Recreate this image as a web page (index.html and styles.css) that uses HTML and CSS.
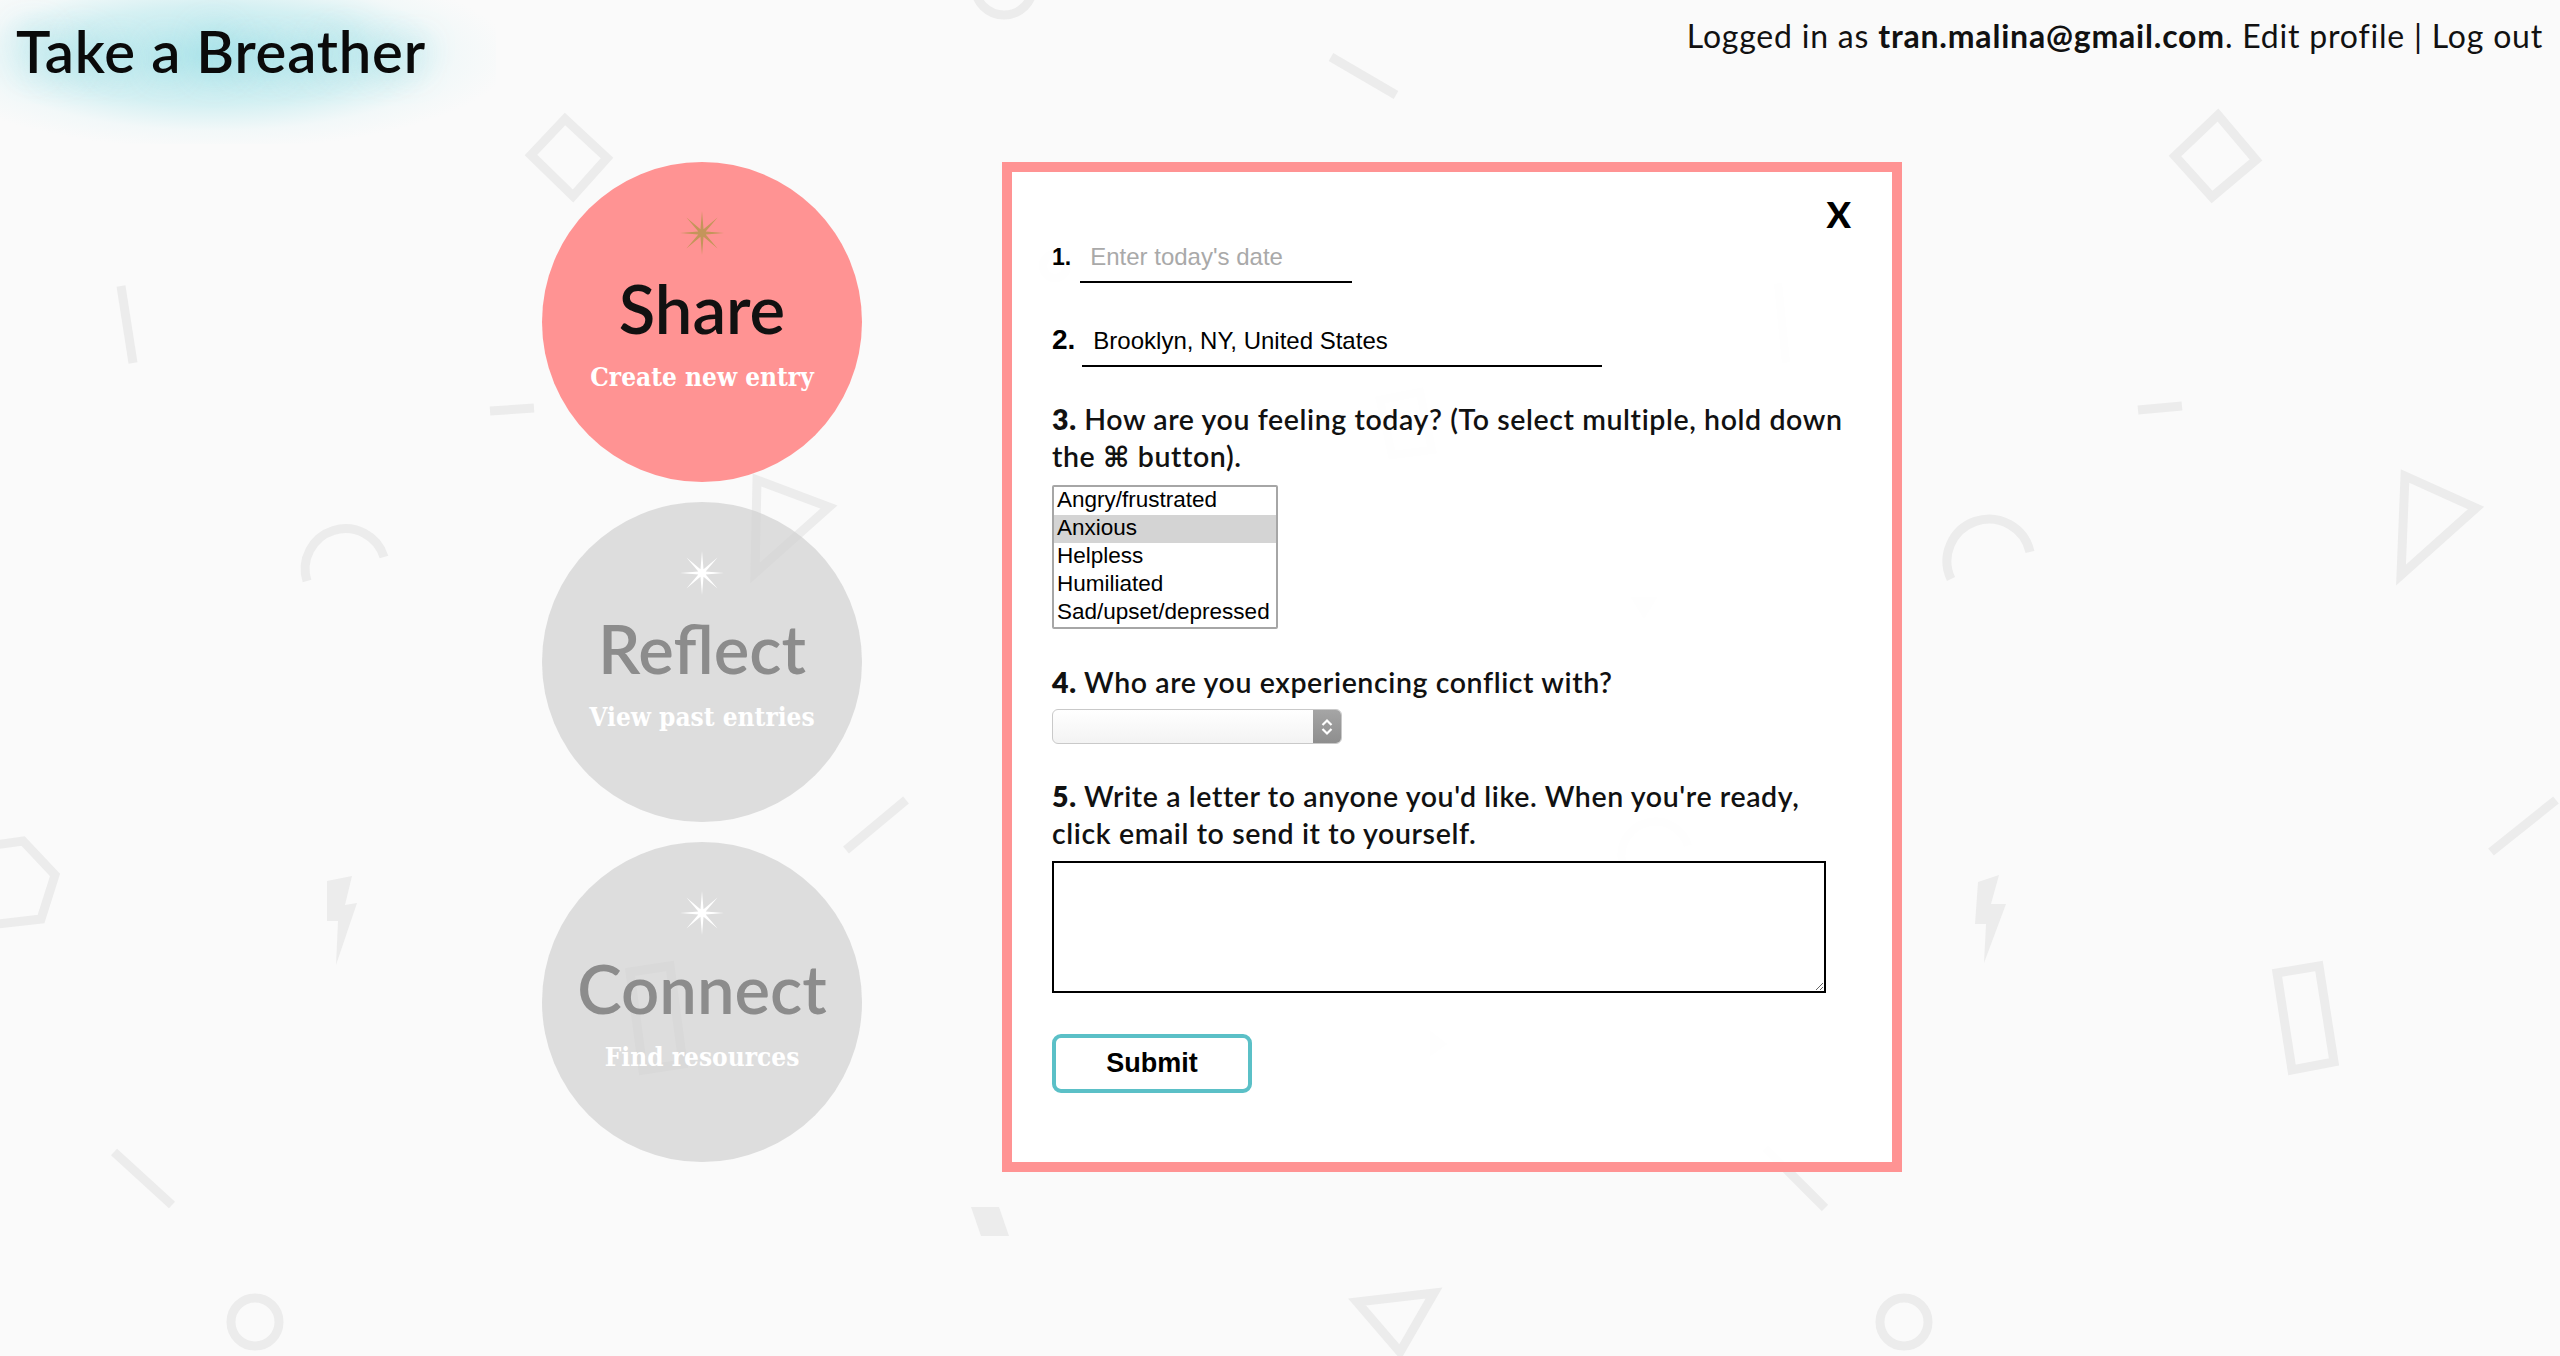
FILE: index.html
```html
<!DOCTYPE html>
<html lang="en">
<head>
<meta charset="utf-8">
<title>Take a Breather</title>
<link rel="stylesheet" href="styles.css">
</head>
<body>
<svg class="bg-shapes" viewBox="0 0 2560 1356" width="2560" height="1356" aria-hidden="true">
  <g class="outline">
    <circle cx="1004" cy="-14" r="29"/>
    <line x1="1331" y1="57" x2="1396" y2="95"/>
    <polygon points="531,155 565,119 607,158 573,196"/>
    <line x1="121" y1="286" x2="133" y2="363"/>
    <line x1="490" y1="411" x2="534" y2="408"/>
    <path d="M307 581 A40 40 0 1 1 384 557"/>
    <polygon points="-20,847 23,841 55,875 41,919 -20,926"/>
    <line x1="114" y1="1152" x2="172" y2="1205"/>
    <circle cx="255" cy="1322" r="24"/>
    <polygon points="757,480 829,507 755,573"/>
    <polygon points="630,972 670,966 683,1064 643,1070"/>
    <line x1="846" y1="850" x2="906" y2="800"/>
    <polygon points="1357,1302 1434,1293 1400,1352"/>
    <circle cx="1904" cy="1322" r="24"/>
    <line x1="1765" y1="1148" x2="1825" y2="1208"/>
    <polygon points="2175,156 2218,115 2256,160 2212,197"/>
    <line x1="2138" y1="410" x2="2182" y2="406"/>
    <path d="M1951 579 A42 42 0 1 1 2030 552"/>
    <polygon points="2405,476 2476,508 2401,575"/>
    <line x1="2491" y1="852" x2="2556" y2="800"/>
    <polygon points="2277,973 2319,966 2334,1062 2292,1070"/>
    <polygon points="1380,400 1420,392 1432,450 1392,455"/>
    <line x1="1778" y1="283" x2="1786" y2="363"/>
    <circle cx="1055" cy="266" r="12"/>
    <path d="M1622 862 A34 34 0 0 1 1688 846"/>
  </g>
  <g class="solid">
    <polygon points="327,881 352,876 345,905 357,903 336,965 338,921 327,921"/>
    <polygon points="1978,882 1999,875 1991,904 2006,904 1984,963 1986,924 1975,924"/>
    <polygon points="971,1207 999,1207 1009,1236 981,1236"/>
    <polygon points="1630,597 1658,597 1644,620"/>
    <polygon points="1430,1030 1448,1044 1430,1057"/>
  </g>
</svg>

<header class="topbar">
  <h1 class="brand">Take a Breather</h1>
  <div class="account">Logged in as <b>tran.malina@gmail.com</b>. Edit profile | Log out</div>
</header>

<main class="stage">
  <nav class="menu">
    <a class="bubble bubble-active" href="#share">
      <svg class="star" viewBox="0 0 44 44" width="44" height="44" aria-hidden="true"><polygon points="44,22 25.7,20.47 37.56,6.44 23.53,18.3 22,0 20.47,18.3 6.44,6.44 18.3,20.47 0,22 18.3,23.53 6.44,37.56 20.47,25.7 22,44 23.53,25.7 37.56,37.56 25.7,23.53"/></svg>
      <span class="bubble-title">Share</span>
      <span class="bubble-sub">Create new entry</span>
    </a>
    <a class="bubble" href="#reflect">
      <svg class="star" viewBox="0 0 44 44" width="44" height="44" aria-hidden="true"><polygon points="44,22 25.7,20.47 37.56,6.44 23.53,18.3 22,0 20.47,18.3 6.44,6.44 18.3,20.47 0,22 18.3,23.53 6.44,37.56 20.47,25.7 22,44 23.53,25.7 37.56,37.56 25.7,23.53"/></svg>
      <span class="bubble-title">Reflect</span>
      <span class="bubble-sub">View past entries</span>
    </a>
    <a class="bubble" href="#connect">
      <svg class="star" viewBox="0 0 44 44" width="44" height="44" aria-hidden="true"><polygon points="44,22 25.7,20.47 37.56,6.44 23.53,18.3 22,0 20.47,18.3 6.44,6.44 18.3,20.47 0,22 18.3,23.53 6.44,37.56 20.47,25.7 22,44 23.53,25.7 37.56,37.56 25.7,23.53"/></svg>
      <span class="bubble-title">Connect</span>
      <span class="bubble-sub">Find resources</span>
    </a>
  </nav>

  <section class="modal">
    <div class="modal-head"><span class="close">X</span></div>
    <form class="entry-form">
      <div class="field-row row-date">
        <span class="num num-small">1.</span>
        <input class="line-input input-date" type="text" placeholder="Enter today's date">
      </div>
      <div class="field-row row-place">
        <span class="num num-large">2.</span>
        <input class="line-input input-place" type="text" value="Brooklyn, NY, United States">
      </div>
      <p class="question q-feel"><b>3.</b> How are you feeling today? (To select multiple, hold down the ⌘ button).</p>
      <select class="feelings" multiple size="5">
        <option>Angry/frustrated</option>
        <option selected>Anxious</option>
        <option>Helpless</option>
        <option>Humiliated</option>
        <option>Sad/upset/depressed</option>
      </select>
      <p class="question q-conflict"><b>4.</b> Who are you experiencing conflict with?</p>
      <div class="dropdown">
        <select class="dropdown-select"><option></option></select>
        <span class="dropdown-arrows"><svg viewBox="0 0 28 34" width="28" height="34" aria-hidden="true"><path d="M9.5 15 L14 10.5 L18.5 15 M9.5 19 L14 23.5 L18.5 19"/></svg></span>
      </div>
      <p class="question q-letter"><b>5.</b> Write a letter to anyone you'd like. When you're ready, click email to send it to yourself.</p>
      <textarea class="letter"></textarea>
      <button class="submit" type="button">Submit</button>
    </form>
  </section>
</main>
</body>
</html>
```

FILE: styles.css
```css
html, body {
  margin: 0;
  padding: 0;
}

body {
  position: relative;
  width: 2560px;
  height: 1356px;
  overflow: hidden;
  background: #fafafa;
  font-family: "Lato", "DejaVu Sans", sans-serif;
  color: #111;
}

.bg-shapes {
  position: absolute;
  left: 0;
  top: 0;
  z-index: 0;
}

.bg-shapes .outline {
  fill: none;
  stroke: #ececec;
  stroke-width: 9;
}

.bg-shapes .solid {
  fill: #ececec;
}

.topbar {
  position: relative;
  z-index: 1;
  box-sizing: border-box;
  height: 162px;
  padding: 17px 17px 0 16px;
  display: flex;
  justify-content: space-between;
  align-items: flex-start;
}

.brand {
  position: relative;
  margin: 0;
  font-size: 58px;
  line-height: 67px;
  letter-spacing: 0.8px;
  font-weight: 600;
  color: #0a0a0a;
  text-shadow: 0 0 30px rgba(140, 218, 226, 0.7);
}

.brand::before {
  content: "";
  position: absolute;
  left: -60px;
  right: -70px;
  top: -50px;
  bottom: -60px;
  z-index: -1;
  background: radial-gradient(ellipse at 48% 50%, rgba(170, 228, 234, 0.85) 0%, rgba(190, 234, 238, 0.6) 40%, rgba(225, 244, 246, 0.3) 60%, rgba(250, 250, 250, 0) 75%);
}

.account {
  margin-top: 1px;
  font-size: 32px;
  line-height: 36px;
  letter-spacing: 0.8px;
  color: #111;
}

.account b {
  font-weight: 700;
}

.stage {
  position: relative;
  z-index: 1;
  display: flex;
  align-items: flex-start;
  padding-left: 542px;
  gap: 140px;
}

.menu {
  display: flex;
  flex-direction: column;
  gap: 20px;
  width: 320px;
}

.bubble {
  box-sizing: border-box;
  width: 320px;
  height: 320px;
  border-radius: 50%;
  background: rgba(209, 209, 209, 0.72);
  display: flex;
  flex-direction: column;
  align-items: center;
  padding-top: 49px;
  text-decoration: none;
}

.bubble-active {
  background: #ff9393;
}

.star {
  display: block;
  fill: #ffffff;
}

.bubble-active .star {
  fill: #c4955a;
}

.bubble-title {
  display: block;
  margin-top: 21px;
  font-size: 67px;
  line-height: 64px;
  font-weight: 600;
  color: #8c8c8c;
}

.bubble-active .bubble-title {
  color: #111;
}

.bubble-sub {
  display: block;
  margin-top: 22px;
  font-family: "DejaVu Serif Condensed", "DejaVu Serif", serif;
  font-stretch: condensed;
  font-weight: 700;
  font-size: 26px;
  line-height: 30px;
  color: #ffffff;
}

.modal {
  box-sizing: border-box;
  width: 900px;
  height: 1010px;
  border: 10px solid #ff9393;
  background: rgba(255, 255, 255, 0.95);
  padding: 24px 41px 0 40px;
}

.modal-head {
  display: flex;
  justify-content: flex-end;
  height: 36px;
}

.close {
  font-size: 36px;
  line-height: 36px;
  font-weight: 900;
  color: #000;
  cursor: pointer;
}

.entry-form {
  margin: 1px 0 0 0;
}

.field-row {
  display: flex;
  align-items: baseline;
}

.row-place {
  margin-top: 34px;
}

.num {
  font-family: "Liberation Sans", Arial, sans-serif;
  font-weight: 700;
  color: #000;
}

.num-small {
  font-size: 23px;
  margin-right: 9px;
}

.num-large {
  font-size: 28px;
  margin-right: 7px;
}

.line-input {
  box-sizing: border-box;
  height: 50px;
  border: 0;
  border-bottom: 2px solid #000;
  padding: 0 10px;
  font-family: "Liberation Sans", Arial, sans-serif;
  font-size: 24px;
  color: #000;
  background: #ffffff;
  outline: none;
}

.line-input::placeholder {
  color: #a9a9a9;
}

.input-date {
  width: 272px;
}

.input-place {
  width: 520px;
  padding-left: 11px;
}

.question {
  margin: 0;
  font-size: 28.5px;
  line-height: 37px;
  letter-spacing: 0.6px;
  font-weight: 600;
  color: #111;
}

.question b {
  font-weight: 800;
}

.q-feel {
  margin-top: 34px;
}

.feelings {
  display: block;
  box-sizing: border-box;
  margin-top: 10px;
  width: 226px;
  height: 144px;
  border: 2px solid #a6a6a6;
  padding: 0;
  font-family: "Liberation Sans", Arial, sans-serif;
  font-size: 22.5px;
  color: #000;
  background: #fff;
  overflow: hidden;
  outline: none;
}

.feelings option {
  height: 28px;
  line-height: 28px;
  padding: 0 3px;
}

.feelings option:checked {
  background: #d4d4d4;
  color: #000;
}

.q-conflict {
  margin-top: 35px;
}

.dropdown {
  box-sizing: border-box;
  margin-top: 8px;
  width: 290px;
  height: 35px;
  display: flex;
  border: 1px solid #c9c9c9;
  border-radius: 6px;
  background: linear-gradient(#ffffff, #f3f3f3);
  overflow: hidden;
}

.dropdown-select {
  flex: 1;
  border: 0;
  background: transparent;
  appearance: none;
  -webkit-appearance: none;
  outline: none;
}

.dropdown-arrows {
  width: 28px;
  background: linear-gradient(#a5a5a5, #8e8e8e);
  display: flex;
  align-items: center;
  justify-content: center;
}

.dropdown-arrows svg {
  display: block;
  fill: none;
  stroke: #ffffff;
  stroke-width: 2.2;
}

.q-letter {
  margin-top: 34px;
}

.letter {
  display: block;
  box-sizing: border-box;
  margin-top: 9px;
  width: 774px;
  height: 132px;
  border: 2px solid #000;
  padding: 4px;
  font-family: "Liberation Sans", Arial, sans-serif;
  font-size: 22px;
  background: #fff;
  outline: none;
}

.submit {
  display: block;
  box-sizing: border-box;
  margin-top: 41px;
  width: 200px;
  height: 59px;
  border: 4px solid #5bc0c7;
  border-radius: 9px;
  background: #fff;
  font-family: "Liberation Sans", Arial, sans-serif;
  font-size: 27px;
  font-weight: 700;
  color: #000;
  padding: 0;
}
```
